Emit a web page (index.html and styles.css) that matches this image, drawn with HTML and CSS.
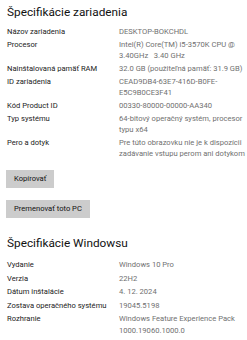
FILE: index.html
```html
<!DOCTYPE html>
<html lang="sk">
<head>
<meta charset="utf-8">
<link rel="stylesheet" href="styles.css">
</head>
<body>
<main class="page">
  <h1 class="title">Špecifikácie zariadenia</h1>
  <dl class="specs specs-device">
    <dt>Názov zariadenia</dt><dd>DESKTOP-BOKCHDL</dd>
    <dt>Procesor</dt><dd>Intel(R) Core(TM) i5-3570K CPU @<br>3.40GHz&nbsp;&nbsp; 3.40 GHz</dd>
    <dt>Nainštalovaná pamäť RAM</dt><dd>32.0 GB (použiteľná pamäť: 31.9 GB)</dd>
    <dt>ID zariadenia</dt><dd>CEAD9DB4-63E7-416D-B0FE-<br>E5C9B0CE3F41</dd>
    <dt>Kód Product ID</dt><dd>00330-80000-00000-AA340</dd>
    <dt>Typ systému</dt><dd>64-bitový operačný systém, procesor<br>typu x64</dd>
    <dt>Pero a dotyk</dt><dd>Pre túto obrazovku nie je k dispozícii<br>zadávanie vstupu perom ani dotykom</dd>
  </dl>
  <div class="actions">
    <button class="btn">Kopírovať</button>
    <button class="btn">Premenovať toto PC</button>
  </div>
  <h1 class="title title-win">Špecifikácie Windowsu</h1>
  <dl class="specs specs-win">
    <dt>Vydanie</dt><dd>Windows 10 Pro</dd>
    <dt>Verzia</dt><dd>22H2</dd>
    <dt>Dátum inštalácie</dt><dd>4. 12. 2024</dd>
    <dt>Zostava operačného systému</dt><dd>19045.5198</dd>
    <dt>Rozhranie</dt><dd>Windows Feature Experience Pack<br>1000.19060.1000.0</dd>
  </dl>
</main>
</body>
</html>
```
FILE: styles.css
```css
html, body {
  margin: 0;
  padding: 0;
  background: #ffffff;
}
.page {
  padding: 3px 0 0 7px;
  font-family: Roboto, "Liberation Sans", Arial, sans-serif;
  font-size: 7.6px;
  color: #1b1b1b;
}
.title {
  margin: 0;
  font-size: 11.8px;
  font-weight: 400;
  line-height: 18px;
  color: #111;
}
.specs {
  display: grid;
  grid-template-columns: 112px 128px;
  margin: 0;
  white-space: nowrap;
}
.specs-device {
  margin-top: 5px;
  row-gap: 2px;
  line-height: 11px;
}
.specs-win {
  margin-top: 7px;
  row-gap: 2px;
  line-height: 11.5px;
}
.specs dt {
  margin: 0;
}
.specs dd {
  margin: 0;
  color: #707070;
}
.actions {
  display: flex;
  flex-direction: column;
  align-items: flex-start;
  gap: 12px;
  margin-top: 11px;
  margin-left: -1px;
}
.btn {
  font-family: inherit;
  font-size: 7.6px;
  color: #111;
  background: #cccccc;
  border: none;
  padding: 0 8px;
  height: 18px;
  line-height: 18px;
}
.title-win {
  margin-top: 16px;
}
```
